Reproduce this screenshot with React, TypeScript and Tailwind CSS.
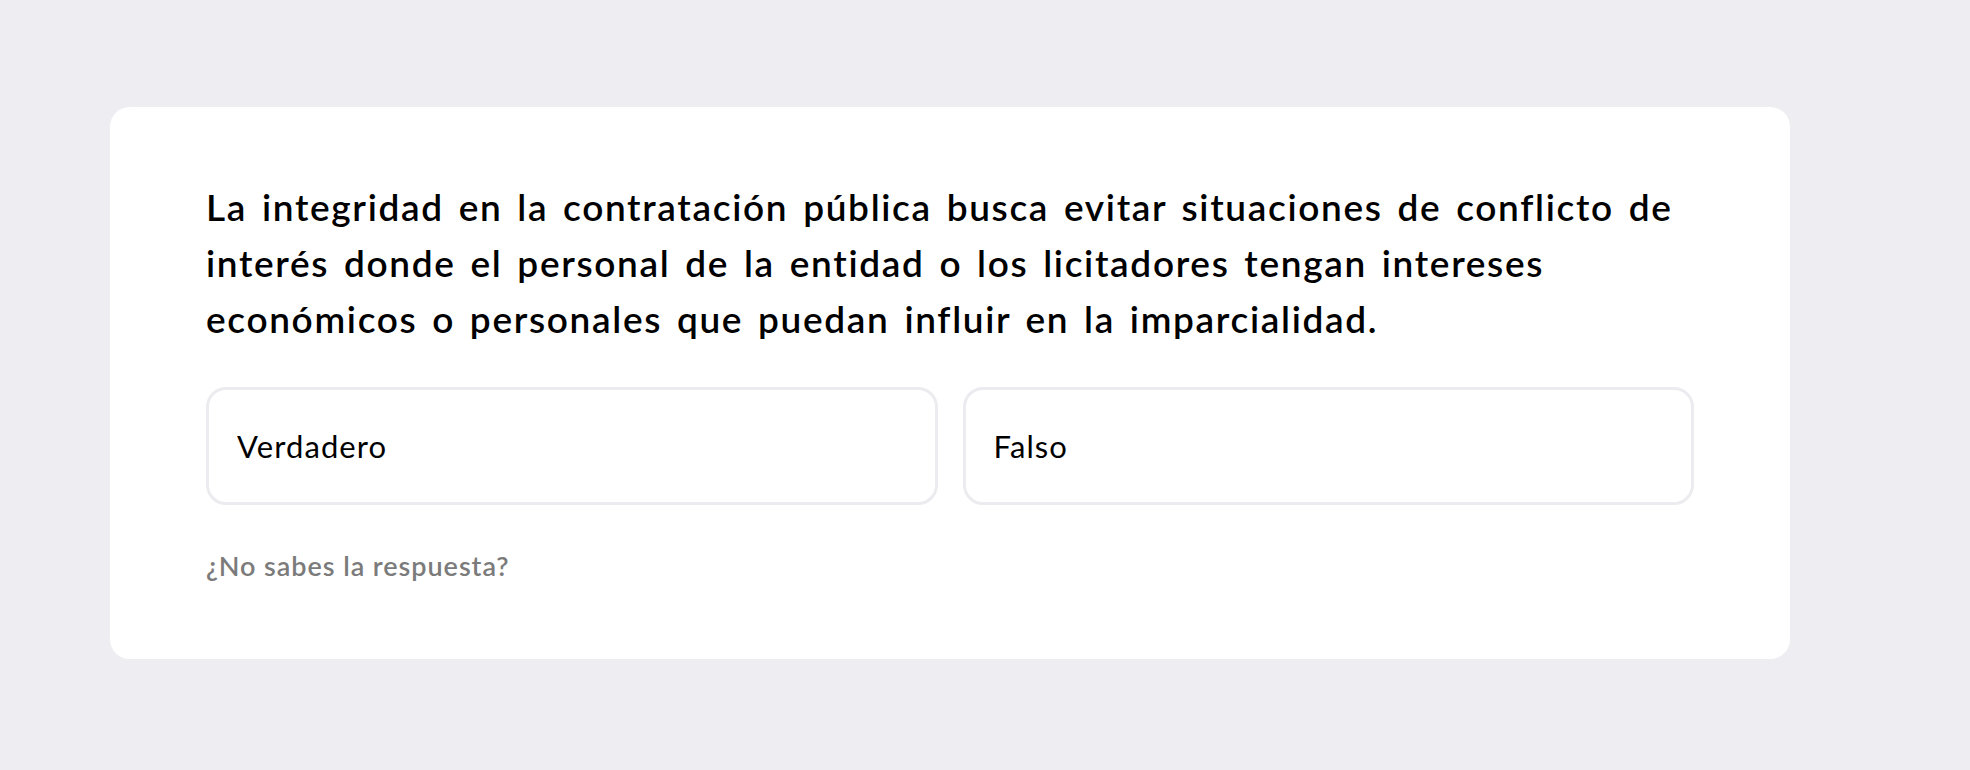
export default function App() {
  return (
    <div className="min-h-[770px] w-full bg-[#eeedf2] pt-[107px] pl-[110px]" style={{ fontFamily: 'Lato, "Noto Sans", sans-serif' }}>
      <div className="w-[1680px] rounded-[20px] bg-white px-[96px] pt-[72px] pb-[75px]">
        <p className="text-[37px] leading-[56px] font-semibold tracking-[0.045em] [word-spacing:4px] text-black">
          La integridad en la contratación pública busca evitar situaciones de conflicto de interés donde el personal de la entidad o los licitadores tengan intereses económicos o personales que puedan influir en la imparcialidad.
        </p>
        <div className="mt-[40px] grid grid-cols-2 gap-[25px]">
          <button className="h-[118px] rounded-[20px] border-[3px] border-[#ececf0] bg-white px-[28px] text-left text-[31px] tracking-[0.035em] text-black">
            Verdadero
          </button>
          <button className="h-[118px] rounded-[20px] border-[3px] border-[#ececf0] bg-white px-[28px] text-left text-[31px] tracking-[0.035em] text-black">
            Falso
          </button>
        </div>
        <div className="mt-[43px] text-[27px] leading-[36px] font-semibold tracking-[0.035em] text-[#7b7b7b]">¿No sabes la respuesta?</div>
      </div>
    </div>
  );
}
